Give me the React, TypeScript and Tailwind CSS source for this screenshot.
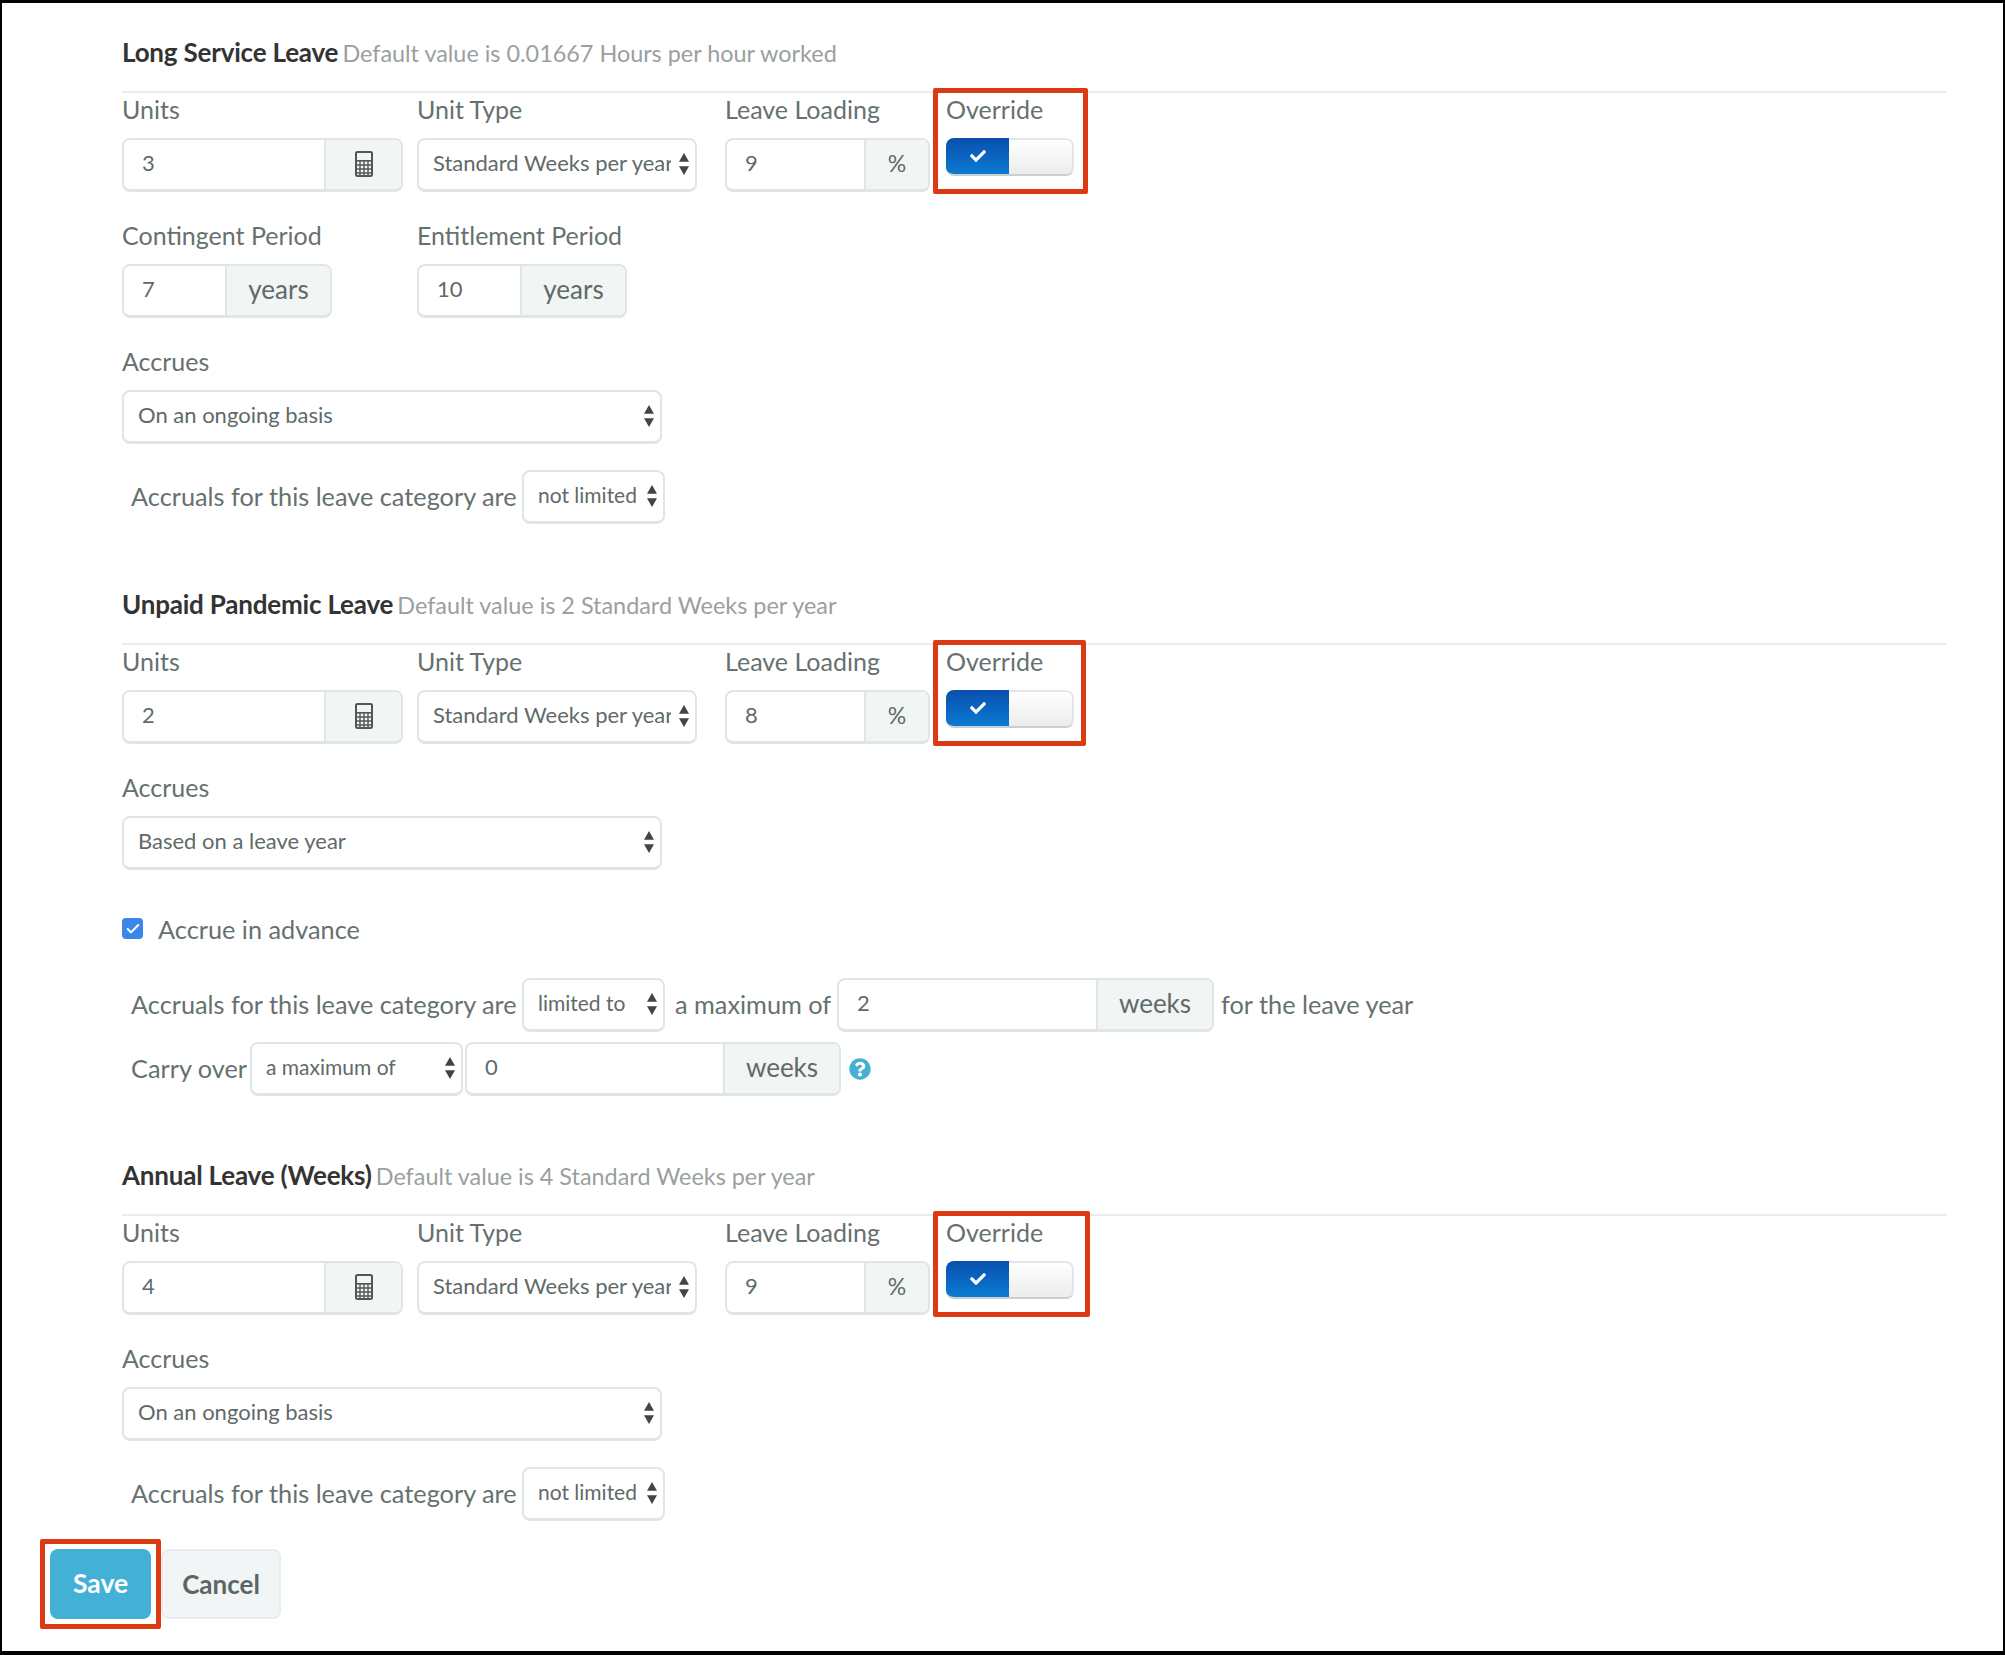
import { Check } from 'lucide-react';
import { FaCheck, FaQuestionCircle } from 'react-icons/fa';

const labelClass = 'block h-9 leading-9 mb-[11px] text-[25px] text-[#66716f] whitespace-nowrap';
const boxClass = 'border-2 border-b-[3px] border-[#e0e6e5] bg-white';

function CalculatorIcon() {
  return (
    <svg width="18" height="26" viewBox="0 0 18 26" className="text-[#555]">
      <rect x="1" y="1" width="16" height="24" rx="1.5" fill="none" stroke="currentColor" strokeWidth="2" />
      <rect x="1" y="9" width="16" height="1.6" fill="currentColor" />
      <path d="M1 14h16M1 18h16M1 22h16M5 10v14M9 10v14M13 10v14" stroke="currentColor" strokeWidth="1.4" fill="none" />
    </svg>
  );
}

function SortArrows() {
  return (
    <svg width="10" height="22" viewBox="0 0 10 20" preserveAspectRatio="none" className="text-[#444]">
      <path d="M5 0l5 8H0zM5 20L0 12h10z" fill="currentColor" />
    </svg>
  );
}

function InputGroup({
  value,
  inputWidth,
  addon,
  addonText = 'text-[26px]',
}: {
  value: string;
  inputWidth: number;
  addon: React.ReactNode;
  addonText?: string;
}) {
  return (
    <div className={`flex h-[54px] rounded-lg overflow-hidden ${boxClass}`}>
      <input
        readOnly
        value={value}
        style={{ width: inputWidth }}
        className="h-full pl-[18px] pb-[4px] bg-transparent text-[22px] text-[#5f6a69] outline-none"
      />
      <div
        className={`flex flex-1 items-center justify-center pb-[2px] bg-[#f1f5f4] border-l-2 border-[#e0e6e5] text-[#5f6a69] ${addonText}`}
      >
        {addon}
      </div>
    </div>
  );
}

function Select({ value, width, small }: { value: string; width: number; small?: boolean }) {
  return (
    <div style={{ width }} className={`relative h-[54px] rounded-lg shrink-0 ${boxClass}`}>
      <select
        value={value}
        onChange={() => {}}
        className={`w-full h-full pl-[14px] pr-[24px] pb-[4px] appearance-none bg-transparent text-[#5f6a69] outline-none ${
          small ? 'text-[21px]' : 'text-[22px]'
        }`}
      >
        <option>{value}</option>
      </select>
      <span className="absolute right-[6px] top-[13px] flex pointer-events-none">
        <SortArrows />
      </span>
    </div>
  );
}

function Override({ width }: { width: number }) {
  return (
    <div
      style={{ width }}
      className="relative -mt-[3px] -mb-[3px] -ml-[2px] h-[106px] pl-2 bg-white border-[5px] border-[#dc3a12] rounded-[2px] shrink-0"
    >
      <span className="block h-9 leading-9 -mt-[2px] mb-[11px] text-[25px] text-[#66716f]">Override</span>
      <div className="flex w-[128px] h-[38px] rounded-lg overflow-hidden border-b-2 border-[#c9cfcf]">
        <div className="flex items-center justify-center w-[63px] bg-linear-to-b from-[#0a4fae] to-[#0c7bd2]">
          <FaCheck className="w-4 h-4 text-white" />
        </div>
        <div className="flex-1 border-t-2 border-r-2 border-[#e4e7e7] rounded-r-lg bg-linear-to-b from-white to-[#ececec]" />
      </div>
    </div>
  );
}

function TopRow({ units, loading, overrideWidth }: { units: string; loading: string; overrideWidth: number }) {
  return (
    <div className="flex -mt-[2px]">
      <div className="w-[295px]">
        <span className={labelClass}>Units</span>
        <div className="w-[281px]">
          <InputGroup value={units} inputWidth={200} addon={<CalculatorIcon />} />
        </div>
      </div>
      <div className="w-[308px]">
        <span className={labelClass}>Unit Type</span>
        <Select value="Standard Weeks per year" width={280} />
      </div>
      <div className="w-[210px]">
        <span className={labelClass}>Leave Loading</span>
        <div className="w-[205px]">
          <InputGroup value={loading} inputWidth={137} addon="%" addonText="text-[23px]" />
        </div>
      </div>
      <Override width={overrideWidth} />
    </div>
  );
}

function PeriodField({ label, value, width }: { label: string; value: string; width: number }) {
  return (
    <div style={{ width }}>
      <span className={labelClass}>{label}</span>
      <div className="w-[210px]">
        <InputGroup value={value} inputWidth={101} addon="years" />
      </div>
    </div>
  );
}

function Accrues({ value }: { value: string }) {
  return (
    <div className="mt-[25px]">
      <span className={labelClass}>Accrues</span>
      <Select value={value} width={540} />
    </div>
  );
}

function Accruals({ value, width, children }: { value: string; width: number; children?: React.ReactNode }) {
  return (
    <div className="flex items-center h-[54px] pl-[9px] text-[25.3px] text-[#66716f] whitespace-nowrap">
      <span className="w-[391px]">Accruals for this leave category are</span>
      <Select value={value} width={width} small />
      {children}
    </div>
  );
}

function SectionHeader({ title, note }: { title: string; note: string }) {
  return (
    <div className="mb-[19px] h-10 leading-10 whitespace-nowrap">
      <span className="text-[26px] font-bold text-[#333] tracking-[-0.2px]">{title}</span>{' '}
      <span className="text-[23.4px] text-[#9a9f9f]">{note}</span>
    </div>
  );
}

export default function App() {
  return (
    <div
      className="w-[2005px] h-[1655px] bg-white border-[2px] border-t-[3px] border-b-[4px] border-black overflow-hidden"
      style={{ fontFamily: 'Lato, "Open Sans", sans-serif' }}
    >
      <div className="pl-[120px] pt-[29px]">
        {/* Long Service Leave */}
        <section className="w-[1825px]">
          <SectionHeader title="Long Service Leave" note="Default value is 0.01667 Hours per hour worked" />
          <div className="border-t-2 border-[#e9eded]">
            <TopRow units="3" loading="9" overrideWidth={155} />
          </div>
          <div className="flex mt-[25px]">
            <PeriodField label="Contingent Period" value="7" width={295} />
            <PeriodField label="Entitlement Period" value="10" width={300} />
          </div>
          <Accrues value="On an ongoing basis" />
          <div className="mt-[26px]">
            <Accruals value="not limited" width={143} />
          </div>
        </section>

        {/* Unpaid Pandemic Leave */}
        <section className="w-[1825px] mt-[60px]">
          <SectionHeader title="Unpaid Pandemic Leave" note="Default value is 2 Standard Weeks per year" />
          <div className="border-t-2 border-[#e9eded]">
            <TopRow units="2" loading="8" overrideWidth={153} />
          </div>
          <Accrues value="Based on a leave year" />
          <label className="flex items-center h-[22px] mt-[49px] text-[25.3px] text-[#66716f]">
            <span className="flex items-center justify-center w-[21px] h-[21px] -mt-[3px] mr-[15px] rounded-[4px] bg-[#3a86ea]">
              <Check className="w-4 h-4 text-white" strokeWidth={3} />
            </span>
            Accrue in advance
          </label>
          <div className="mt-[37px]">
            <Accruals value="limited to" width={143}>
              <span className="ml-[10px] w-[162px]">a maximum of</span>
              <div className="w-[377px]">
                <InputGroup value="2" inputWidth={257} addon="weeks" />
              </div>
              <span className="ml-[7px]">for the leave year</span>
            </Accruals>
          </div>
          <div className="flex items-center h-[54px] mt-[10px] pl-[9px] text-[25.3px] text-[#66716f] whitespace-nowrap">
            <span className="w-[119px]">Carry over</span>
            <Select value="a maximum of" width={213} small />
            <div className="w-[376px] ml-[2px]">
              <InputGroup value="0" inputWidth={256} addon="weeks" />
            </div>
            <FaQuestionCircle className="ml-[8px] w-[22px] h-[22px] text-[#45b1d2]" />
          </div>
        </section>

        {/* Annual Leave (Weeks) */}
        <section className="w-[1825px] mt-[59px]">
          <SectionHeader title="Annual Leave (Weeks)" note="Default value is 4 Standard Weeks per year" />
          <div className="border-t-2 border-[#e9eded]">
            <TopRow units="4" loading="9" overrideWidth={157} />
          </div>
          <Accrues value="On an ongoing basis" />
          <div className="mt-[26px]">
            <Accruals value="not limited" width={143} />
          </div>
        </section>

        {/* Actions */}
        <div className="flex items-end -ml-[82px] mt-[18px]">
          <div className="p-[5px] border-[5px] border-[#dc3a12] rounded-[2px] bg-white">
            <button className="block w-[101px] h-[70px] rounded-lg bg-[#43b1d5] text-[26.5px] font-bold text-white">
              Save
            </button>
          </div>
          <button className="w-[120px] h-[70px] mb-[10px] rounded-lg border-2 border-[#e9eded] bg-[#f2f5f5] text-[26px] font-bold text-[#5b6665]">
            Cancel
          </button>
        </div>
      </div>
    </div>
  );
}
